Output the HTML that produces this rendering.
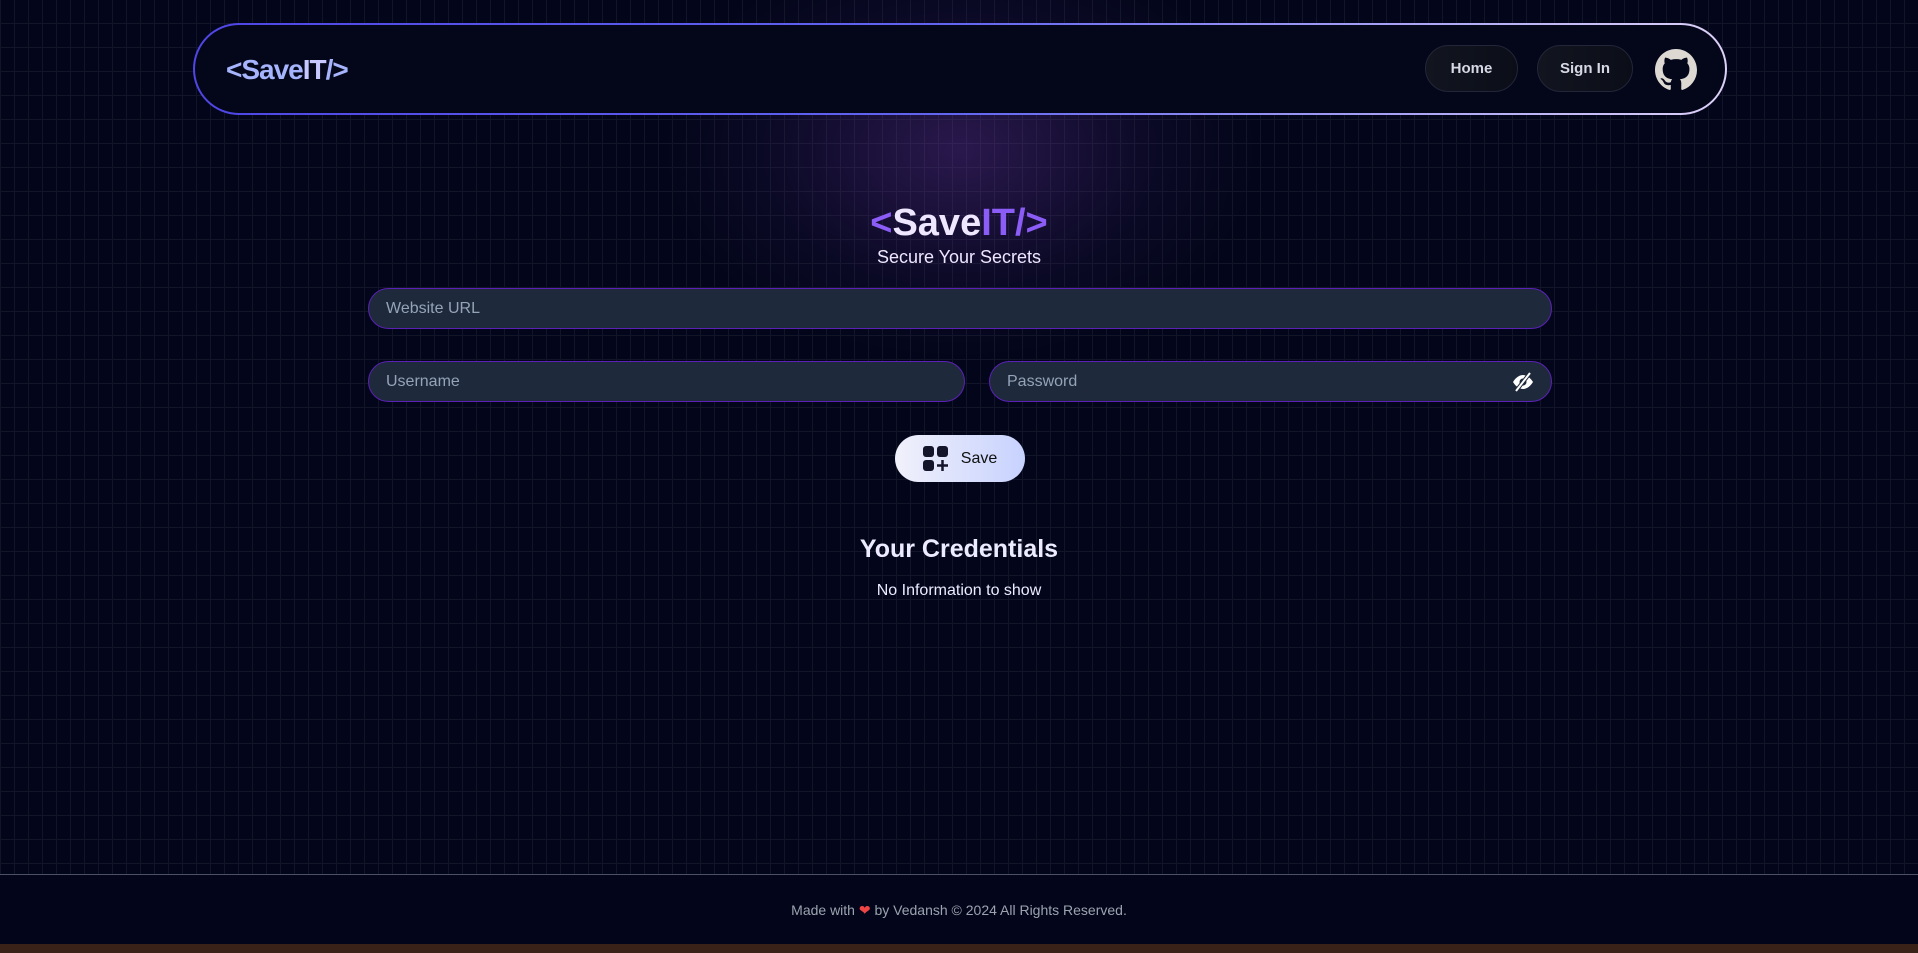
<!DOCTYPE html>
<html><head><meta charset="utf-8"><style>
*{box-sizing:border-box;margin:0;padding:0}
body{width:1918px;height:953px;overflow:hidden;background:#03061a;font-family:"Liberation Sans",sans-serif;position:relative}
.bg{position:absolute;left:0;top:0;width:1918px;height:874px;
background-image:linear-gradient(#121528 1px,transparent 1px),linear-gradient(90deg,#121528 1px,transparent 1px);background-size:14px 24px;background-position:0 -1px}
.glow{position:absolute;left:660px;top:-60px;width:600px;height:420px;background:radial-gradient(ellipse at center,rgba(120,60,180,.33),rgba(60,30,110,.14) 45%,transparent 70%)}
.nav{position:absolute;left:193px;top:23px;width:1534px;height:92px;border-radius:46px;padding:2px;background:linear-gradient(90deg,#4f46e5,#6366f1 50%,#ddd0f8)}
.nav .in{width:100%;height:100%;border-radius:44px;background:#040619;position:relative}
.logo{position:absolute;left:31px;top:29px;font-size:28px;font-weight:bold;color:#a5b4fc;letter-spacing:-1px}
.logo b{color:#c7c8ff}
.btn{position:absolute;top:20px;height:47px;border-radius:24px;border:1px solid #222638;background:linear-gradient(90deg,#12151f,#0b0e18);color:#d6d8e4;font-size:15px;font-weight:bold;display:flex;align-items:center;justify-content:center}
.gh{position:absolute;left:1460px;top:24px}
.hero{position:absolute;left:0;width:1918px;text-align:center;color:#efe6ff}
.inp{position:absolute;height:41px;border-radius:21px;background:#1e293b;border:1px solid #5b21b6;color:#94a3b8;font-size:16px;padding-left:17px;line-height:39px}
.save{position:absolute;left:895px;top:435px;width:130px;height:47px;border-radius:24px;background:linear-gradient(90deg,#f1f1fb,#c7d2fe);display:flex;align-items:center;justify-content:center;gap:12px;font-size:16px;color:#111}
.foot{position:absolute;left:0;top:874px;width:1918px;height:70px;border-top:1px solid #4b5266;background:#03061a;text-align:center;color:#9ca3af;font-size:14px;line-height:70px}
.wood{position:absolute;left:0;top:944px;width:1918px;height:9px;background:#3a2218}
</style></head><body>
<div class="bg"></div><div class="glow"></div>
<div class="nav"><div class="in">
<div class="logo">&lt;Save<b>IT</b>/&gt;</div>
<div class="btn" style="left:1230px;width:93px">Home</div>
<div class="btn" style="left:1342px;width:96px">Sign In</div>
<svg class="gh" width="42" height="42" viewBox="0 0 16 16"><path fill="#ddd8d2" d="M8 0C3.58 0 0 3.58 0 8c0 3.54 2.29 6.53 5.47 7.59.4.07.55-.17.55-.38 0-.19-.01-.82-.01-1.49-2.01.37-2.53-.49-2.69-.94-.09-.23-.48-.94-.82-1.130-.28-.15-.68-.52-.01-.53.63-.01 1.08.58 1.23.82.72 1.21 1.87.87 2.33.66.07-.52.28-.87.51-1.07-1.78-.2-3.64-.89-3.64-3.95 0-.87.31-1.59.82-2.15-.08-.2-.36-1.02.08-2.12 0 0 .67-.21 2.2.82.64-.18 1.32-.27 2-.27.68 0 1.36.09 2 .27 1.53-1.04 2.2-.82 2.2-.82.44 1.1.16 1.92.08 2.12.51.56.82 1.27.82 2.15 0 3.07-1.87 3.75-3.65 3.95.29.25.54.73.54 1.48 0 1.07-.01 1.93-.01 2.2 0 .21.15.46.55.38A8.013 8.013 0 0016 8c0-4.42-3.58-8-8-8z"/></svg>
</div></div>
<div class="hero" style="top:202px;font-size:38px;font-weight:bold"><span style="color:#8b5cf6">&lt;</span>Save<span style="color:#8b5cf6">IT/&gt;</span></div>
<div class="hero" style="top:247px;font-size:18px">Secure Your Secrets</div>
<div class="inp" style="left:368px;top:288px;width:1184px">Website URL</div>
<div class="inp" style="left:368px;top:361px;width:597px">Username</div>
<div class="inp" style="left:989px;top:361px;width:563px">Password
<svg style="position:absolute;right:16px;top:10px" width="24" height="20" viewBox="0 0 24 20"><path d="M2 10c3-5 7-7 10-7s7 2 10 7c-3 5-7 7-10 7S5 15 2 10z" fill="#fff"/><circle cx="12" cy="10" r="3.5" fill="#1e293b"/><path d="M5 19L19 1" stroke="#1e293b" stroke-width="4"/><path d="M5 19L19 1" stroke="#fff" stroke-width="2"/></svg></div>
<div class="save"><svg width="26" height="26" viewBox="0 0 26 26" fill="#14142b"><rect x="0" y="0" width="11" height="11" rx="3"/><rect x="14" y="0" width="11" height="11" rx="3"/><rect x="0" y="14" width="11" height="11" rx="3"/><path d="M19.5 14v11M14 19.5h11" stroke="#14142b" stroke-width="2.5"/></svg>Save</div>
<div class="hero" style="top:535px;font-size:25px;font-weight:bold;color:#ecebff">Your Credentials</div>
<div class="hero" style="top:582px;font-size:16px;color:#ecebff">No Information to show</div>
<div class="foot">Made with <span style="color:#ef4444">❤</span> by Vedansh © 2024 All Rights Reserved.</div>
<div class="wood"></div>
</body></html>
